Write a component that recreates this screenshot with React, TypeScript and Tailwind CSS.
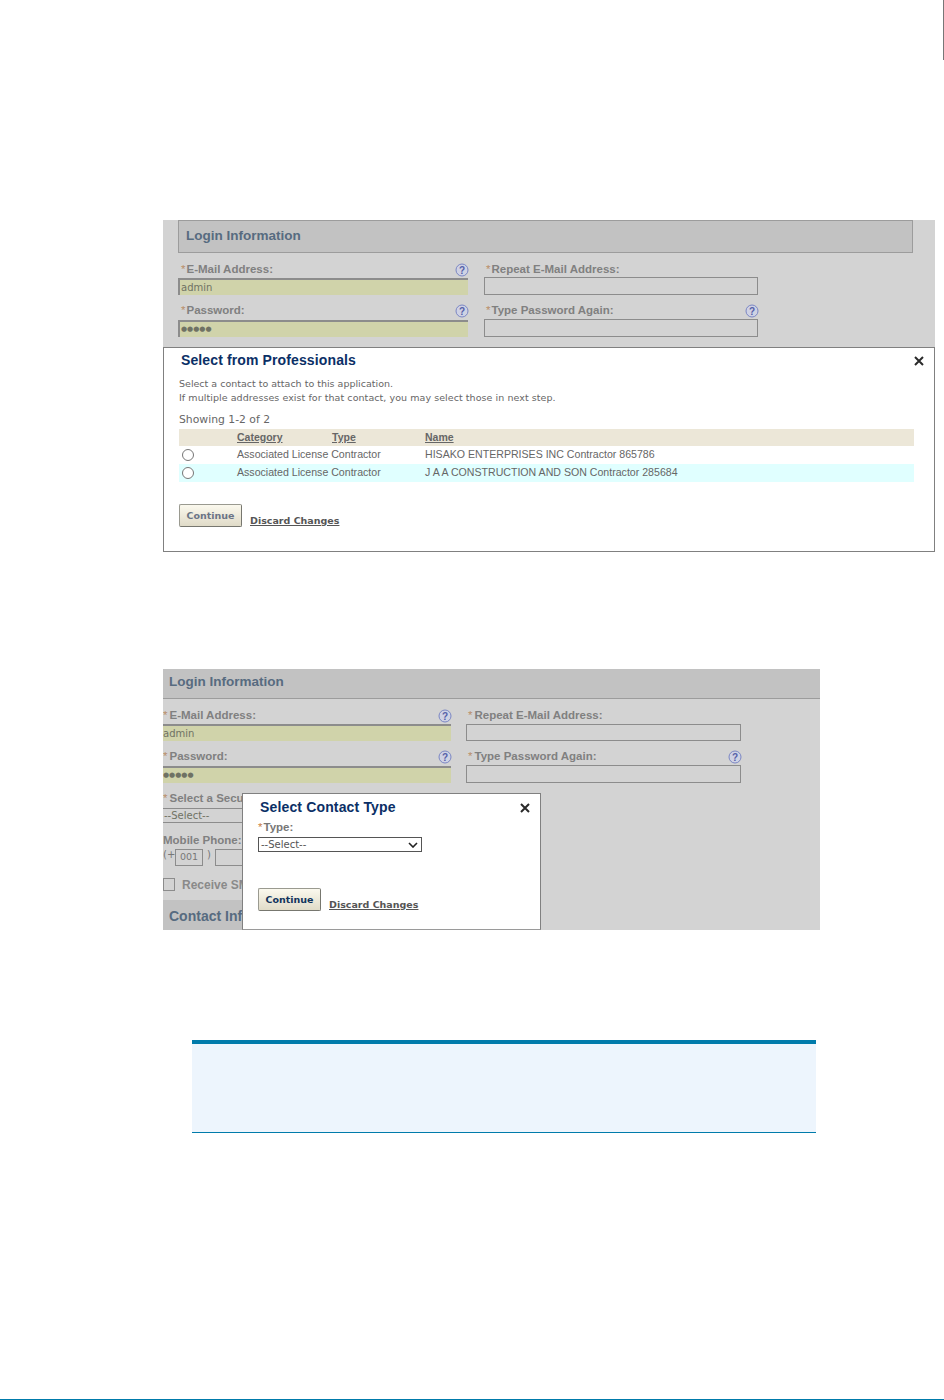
import React from "react";

const sans = "font-['Liberation_Sans',Arial,sans-serif]";
const deja = "font-['DejaVu_Sans',Verdana,sans-serif]";

function Help() {
  return (
    <svg width="14" height="14" viewBox="0 0 14 14" className="-mr-[1px] mt-[1px] shrink-0">
      <circle cx="7" cy="7" r="6" fill="#cfd2e4" stroke="#7b86c4" strokeWidth="1" />
      <text x="7" y="10.5" textAnchor="middle" fontSize="10" fontWeight="700" fill="#5560a8" fontFamily="Liberation Sans, sans-serif">?</text>
    </svg>
  );
}

function CloseX() {
  return (
    <svg width="10" height="10" viewBox="0 0 10 10">
      <path d="M1 1L9 9M9 1L1 9" stroke="#2a2a2a" strokeWidth="2" />
    </svg>
  );
}

function Label({ text, help, gap = "mr-[1px]" }: { text: string; help?: boolean; gap?: string }) {
  return (
    <div className={`flex h-[14px] items-center justify-between text-[11.5px] font-bold leading-[14px] text-[#808080] ${sans}`}>
      <span className="whitespace-nowrap"><span className={`font-normal text-[#b98f68] ${gap}`}>*</span>{text}</span>
      {help && <Help />}
    </div>
  );
}

function FilledInput({ value, stars }: { value: string; stars?: boolean }) {
  return (
    <div className={`flex h-[17px] items-center border-t-2 border-l-2 border-[#8c8c8c] bg-[#d0d3aa] pl-[1px] text-[#6f7264] ${deja} ${stars ? "text-[7px]" : "text-[10px]"}`}>
      {value}
    </div>
  );
}

function FilledInput2({ value, stars }: { value: string; stars?: boolean }) {
  return (
    <div className={`flex h-[17px] items-center border-t-2 border-[#8c8c8c] bg-[#d0d3aa] text-[#6f7264] ${deja} ${stars ? "text-[7px]" : "text-[10px]"}`}>{value}</div>
  );
}

function EmptyInput() {
  return <div className="h-[18px] border border-[#8c8c8c]" />;
}

function Radio() {
  return <div className="ml-[3px] mt-[3px] h-[12px] w-[12px] rounded-full border border-[#767676] bg-white" />;
}

function Continue({ dark }: { dark?: boolean }) {
  return (
    <button className={`h-[23px] w-[63px] rounded-[2px] border border-[#9a9a90] border-b-[#77776f] border-r-[#77776f] bg-gradient-to-b from-[#fbf9ee] to-[#e0dbc8] pt-[1px] text-[9.5px] font-bold ${deja} ${dark ? "text-[#12345c]" : "text-[#6b7486]"}`}>
      Continue
    </button>
  );
}

function Discard({ top }: { top: string }) {
  return <span className={`whitespace-nowrap text-[9.5px] font-bold text-[#555] underline ${deja} ${top}`}>Discard Changes</span>;
}

function Figure1() {
  return (
    <div className="ml-[163px] w-[772px] bg-[#d3d3d3]">
      <div className="pl-[15px] pr-[22px]">
        <div className={`flex h-[33px] items-center border border-[#9c9c9c] bg-[#c2c2c2] pl-[7px] text-[13.5px] font-bold text-[#576b80] ${sans}`}>Login Information</div>
        <div className="mt-[9px] grid grid-cols-[290px_274px] gap-x-[16px] gap-y-[8px]">
          <div className="flex flex-col gap-[2px]">
            <div className="pl-[3px]"><Label text="E-Mail Address:" help /></div>
            <FilledInput value="admin" />
          </div>
          <div className="flex flex-col gap-[1px]">
            <div className="pl-[2px]"><Label text="Repeat E-Mail Address:" /></div>
            <EmptyInput />
          </div>
          <div className="flex flex-col gap-[3px]">
            <div className="pl-[3px]"><Label text="Password:" help /></div>
            <FilledInput value="●●●●●" stars />
          </div>
          <div className="flex flex-col gap-[2px]">
            <div className="pl-[2px]"><Label text="Type Password Again:" help /></div>
            <EmptyInput />
          </div>
        </div>
      </div>
      <div className="mt-[10px] h-[205px] border border-[#808080] bg-white pl-[15px] pr-[20px]">
        <div className="flex h-[24px] items-center justify-between pl-[2px]">
          <span className={`text-[14px] font-bold tracking-[0.12px] text-[#0b2f66] ${sans}`}>Select from Professionals</span>
          <span className="-mr-[10px] mt-[2px]"><CloseX /></span>
        </div>
        <div className={`mt-[5px] text-[9.5px] leading-[14px] text-[#666] ${deja}`}>
          <div>Select a contact to attach to this application.</div>
          <div className="tracking-[0.06px]">If multiple addresses exist for that contact, you may select those in next step.</div>
        </div>
        <div className={`mt-[8px] text-[10.8px] leading-[14px] text-[#666] ${deja}`}>Showing 1-2 of 2</div>
        <div className={`mt-[2px] grid h-[17px] grid-cols-[58px_95px_93px_1fr] items-center bg-[#ece7d8] text-[10.5px] font-bold text-[#666] underline ${sans}`}>
          <span />
          <span>Category</span>
          <span>Type</span>
          <span>Name</span>
        </div>
        <div className={`grid h-[18px] grid-cols-[58px_188px_1fr] bg-white text-[10.6px] leading-[16px] text-[#666] ${sans}`}>
          <Radio />
          <span className="whitespace-nowrap">Associated License Contractor</span>
          <span className="whitespace-nowrap">HISAKO ENTERPRISES INC Contractor 865786</span>
        </div>
        <div className={`grid h-[18px] grid-cols-[58px_188px_1fr] bg-[#e0ffff] text-[10.6px] leading-[16px] text-[#666] ${sans}`}>
          <Radio />
          <span className="whitespace-nowrap">Associated License Contractor</span>
          <span className="whitespace-nowrap">J A A CONSTRUCTION AND SON Contractor 285684</span>
        </div>
        <div className="mt-[22px] flex items-start gap-[8px]">
          <Continue />
          <Discard top="mt-[10px]" />
        </div>
      </div>
    </div>
  );
}

function Figure2() {
  return (
    <div className="relative ml-[163px] mt-[117px] h-[261px] w-[657px] overflow-hidden bg-[#d3d3d3]">
      <div className={`flex h-[30px] items-center border-b border-[#9c9c9c] bg-[#c2c2c2] pb-[2px] pl-[6px] text-[13.5px] font-bold text-[#576b80] ${sans}`}>Login Information</div>
      <div className="mt-[9px] grid grid-cols-[288px_275px] gap-x-[15px] gap-y-[8px]">
        <div className="flex flex-col gap-[2px]">
          <Label text="E-Mail Address:" help gap="mr-[2px]" />
          <FilledInput2 value="admin" />
        </div>
        <div className="flex flex-col gap-[2px]">
          <div className="pl-[2px]"><Label text="Repeat E-Mail Address:" gap="mr-[2px]" /></div>
          <div className="h-[17px] border border-[#8c8c8c]" />
        </div>
        <div className="flex flex-col gap-[3px]">
          <Label text="Password:" help gap="mr-[2px]" />
          <FilledInput2 value="●●●●●" stars />
        </div>
        <div className="flex flex-col gap-[2px]">
          <div className="pl-[2px]"><Label text="Type Password Again:" help gap="mr-[2px]" /></div>
          <EmptyInput />
        </div>
      </div>
      <div className="mt-[8px] w-[79px] overflow-hidden">
        <Label text="Select a Security Question:" gap="mr-[2px]" />
        <div className={`mt-[3px] flex h-[15px] items-center whitespace-nowrap border-y border-[#8c8c8c] pl-[1px] text-[10px] text-[#6f7264] ${deja}`}>--Select--</div>
      </div>
      <div className={`mt-[10px] h-[14px] w-[79px] overflow-hidden whitespace-nowrap text-[11.5px] font-bold leading-[14px] text-[#808080] ${sans}`}>Mobile Phone:</div>
      <div className="mt-[2px] flex w-[79px] items-start overflow-hidden text-[10px] text-[#777]">
        <span className={`w-[12px] shrink-0 whitespace-nowrap leading-[12px] ${deja}`}>(+</span>
        <div className={`flex h-[17px] w-[28px] shrink-0 items-center justify-center border border-[#8c8c8c] text-[9.5px] ${deja}`}>001</div>
        <span className={`ml-[4px] w-[8px] shrink-0 leading-[12px] ${deja}`}>)</span>
        <div className="h-[17px] w-[60px] shrink-0 border border-[#8c8c8c]" />
      </div>
      <div className="mt-[12px] flex h-[13px] w-[79px] items-center gap-[7px] overflow-hidden">
        <div className="h-[13px] w-[12px] shrink-0 border border-[#8c8c8c]" />
        <span className={`whitespace-nowrap text-[12px] font-bold text-[#8a8a8a] ${sans}`}>Receive SMS Alerts</span>
      </div>
      <div className={`mt-[9px] flex h-[30px] w-[79px] items-center overflow-hidden whitespace-nowrap bg-[#c2c2c2] pl-[6px] pt-[2px] text-[14px] font-bold text-[#576b80] ${sans}`}>Contact Information</div>

      <div className="absolute bottom-0 left-[79px] top-[124px] w-[299px] border border-[#808080] border-b-[#9a9a9a] bg-white pl-[15px]">
        <div className="flex h-[26px] items-center justify-between pl-[2px] pr-[10px]">
          <span className={`text-[14px] font-bold tracking-[0.15px] text-[#0b2f66] ${sans}`}>Select Contact Type</span>
          <span className="mt-[1px]"><CloseX /></span>
        </div>
        <div className={`text-[11.5px] font-bold leading-[14px] text-[#777] ${sans}`}><span className="mr-[1px] font-normal text-[#c9813f]">*</span>Type:</div>
        <div className={`mt-[3px] flex h-[15px] w-[164px] items-center justify-between border border-[#555] bg-white pl-[2px] pr-[3px] text-[10px] text-[#555] ${deja}`}>
          --Select--
          <svg width="10" height="6" viewBox="0 0 10 6"><path d="M1 1L5 5L9 1" fill="none" stroke="#222" strokeWidth="1.6" /></svg>
        </div>
        <div className="mt-[36px] flex items-start gap-[8px]">
          <Continue dark />
          <Discard top="mt-[10px]" />
        </div>
      </div>
    </div>
  );
}

export default function App() {
  return (
    <div className="relative flex h-[1400px] w-[944px] flex-col overflow-hidden bg-white">
      <div className="absolute right-0 top-0 h-[60px] w-[1px] bg-[#777]" />
      <div className="h-[220px]" />
      <Figure1 />
      <Figure2 />
      <div className="ml-[192px] mt-[110px] h-[93px] w-[624px] border-b border-t-4 border-[#007bab] bg-[#edf5fd]" />
      <div className="mt-auto h-[1px] bg-[#007bab]" />
    </div>
  );
}
